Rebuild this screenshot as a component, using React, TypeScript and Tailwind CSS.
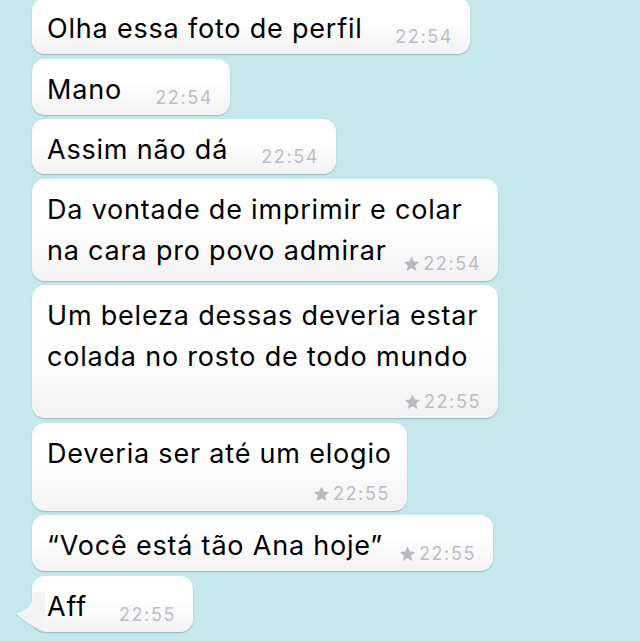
import React from "react";

const font = { fontFamily: "Inter, 'Liberation Sans', sans-serif" };

function Star() {
  return (
    <svg width="17" height="16" viewBox="0 0 24 23" className="mr-[3px] mb-[1px]">
      <path
        d="M12 0.8l3.3 7.1 7.7 0.8-5.8 5.2 1.7 7.6L12 17.6l-6.9 3.9 1.7-7.6L1 8.7l7.7-0.8z"
        fill="#b9b9c1"
      />
    </svg>
  );
}

function Time({ t, star }: { t: string; star?: boolean }) {
  return (
    <div className="flex items-end">
      {star && <Star />}
      <span className="text-[18px] leading-[19px] tracking-[1.6px] text-[#bdbdc5]">{t}</span>
    </div>
  );
}

const bubbleBase =
  "relative shrink-0 rounded-[13px] bg-gradient-to-b from-white from-40% to-[#f2f2f2] shadow-[0_1px_1.5px_rgba(60,90,95,0.35)] pl-[15px] pr-[17px] text-[27px] text-black";

const line = "leading-[41px] tracking-[0.8px] whitespace-nowrap";

function Inline({
  w,
  h,
  text,
  t,
  star,
  tail,
}: {
  w: string;
  h: string;
  text: string;
  t: string;
  star?: boolean;
  tail?: boolean;
}) {
  return (
    <div className={`${bubbleBase} ${w} ${h} flex items-end justify-between pt-[10px] pb-[8px]`}>
      {tail && (
        <svg
          width="32"
          height="40"
          viewBox="0 0 32 40"
          className="absolute left-[-19px] bottom-0"
        >
          <path
            d="M19.5 0 L19.5 5 C19.5 14 11 20 2 22 C8 26 17 35 32 40 L32 0 Z"
            fill="#f4f4f4"
          />
          <path
            d="M2 22 C8 26 17 35 32 40"
            fill="none"
            stroke="rgba(60,90,95,0.25)"
            strokeWidth="1"
          />
        </svg>
      )}
      <div className={`relative self-start ${line}`}>{text}</div>
      <div className="relative">
        <Time t={t} star={star} />
      </div>
    </div>
  );
}

export default function App() {
  return (
    <div className="h-[641px] w-[640px] overflow-hidden bg-[#c6e8ea]" style={font}>
      <div className="mt-[-2px] flex flex-col gap-[4.5px] pl-[32px]">
        <Inline w="w-[438px]" h="h-[56px]" text="Olha essa foto de perfil" t="22:54" />
        <Inline w="w-[198px]" h="h-[56px]" text="Mano" t="22:54" />
        <Inline w="w-[304px]" h="h-[55px]" text="Assim não dá" t="22:54" />

        <div className={`${bubbleBase} w-[466px] h-[102px] flex flex-col pt-[10px]`}>
          <div className={line}>Da vontade de imprimir e colar</div>
          <div className="flex items-end justify-between">
            <div className={line}>na cara pro povo admirar</div>
            <div className="mb-[-2px]">
              <Time t="22:54" star />
            </div>
          </div>
        </div>

        <div className={`${bubbleBase} w-[466px] h-[133px] flex flex-col pt-[10px]`}>
          <div className={line}>Um beleza dessas deveria estar</div>
          <div className={line}>colada no rosto de todo mundo</div>
          <div className="flex flex-1 items-end justify-end pb-[7px]">
            <Time t="22:55" star />
          </div>
        </div>

        <div className={`${bubbleBase} w-[375px] h-[88px] flex flex-col pt-[10px]`}>
          <div className={line}>Deveria ser até um elogio</div>
          <div className="flex flex-1 items-end justify-end pb-[8px]">
            <Time t="22:55" star />
          </div>
        </div>

        <Inline w="w-[461px]" h="h-[56px]" text="“Você está tão Ana hoje”" t="22:55" star />
        <Inline w="w-[161px]" h="h-[56px]" text="Aff" t="22:55" tail />
      </div>
    </div>
  );
}
